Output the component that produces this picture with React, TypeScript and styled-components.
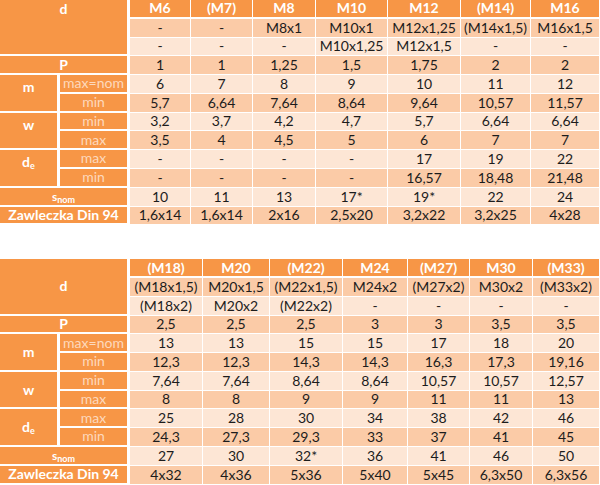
import React from "react";
import styled, { createGlobalStyle } from "styled-components";

const Global = createGlobalStyle`
  html, body { margin: 0; padding: 0; background: #fff; }
  body { font-family: Lato, "Open Sans", sans-serif; }
`;

const ORANGE = "#F79646";
const MID = "#FBCBA7";
const LIGHT = "#FDE6D5";

const Page = styled.div`
  width: 600px;
  display: flex;
  flex-direction: column;
  gap: 34px;
`;

const Table = styled.table`
  width: 600px;
  table-layout: fixed;
  border-collapse: separate;
  border-spacing: 0;
  font-size: 14px;
`;

const Row = styled.tr`
  height: 18.75px;
`;

const Label = styled.td<{ $sub?: boolean; $top?: number }>`
  background: ${ORANGE};
  color: ${(p) => (p.$sub ? "#FDD9BD" : "#fff")};
  font-weight: ${(p) => (p.$sub ? 400 : 700)};
  text-align: center;
  vertical-align: ${(p) => (p.$top !== undefined ? "top" : "middle")};
  padding: ${(p) => (p.$top !== undefined ? `${p.$top}px 0 0` : "0")};
  line-height: 16px;
  white-space: nowrap;
  border-bottom: 2px solid #fff;
  border-right: 3px solid #fff;
`;

const Head = styled.td`
  background: ${ORANGE};
  color: #fff;
  font-weight: 700;
  text-align: center;
  padding: 0;
  line-height: 16px;
  border-bottom: 2px solid #fff;
  border-right: 1px solid #fff;
  white-space: nowrap;
`;

const Cell = styled.td<{ $shade: "mid" | "light" }>`
  background: ${(p) => (p.$shade === "mid" ? MID : LIGHT)};
  color: #1c1c1c;
  text-align: center;
  padding: 0;
  line-height: 16px;
  border-bottom: 1px solid #fff;
  border-right: 1px solid #fff;
  white-space: nowrap;
`;

const Sub = styled.sub`
  font-size: 9px;
  vertical-align: -2px;
  line-height: 0;
`;

const Small = styled.span`
  font-size: 12px;
`;

type Data = {
  widths: number[];
  cols: string[];
  fine1: string[];
  fine2: string[];
  P: string[];
  mmax: string[];
  mmin: string[];
  wmin: string[];
  wmax: string[];
  demax: string[];
  demin: string[];
  s: string[];
  z: string[];
};

const top: Data = {
  widths: [61, 62, 63, 72, 73, 70, 69],
  cols: ["M6", "(M7)", "M8", "M10", "M12", "(M14)", "M16"],
  fine1: ["-", "-", "M8x1", "M10x1", "M12x1,25", "(M14x1,5)", "M16x1,5"],
  fine2: ["-", "-", "-", "M10x1,25", "M12x1,5", "-", "-"],
  P: ["1", "1", "1,25", "1,5", "1,75", "2", "2"],
  mmax: ["6", "7", "8", "9", "10", "11", "12"],
  mmin: ["5,7", "6,64", "7,64", "8,64", "9,64", "10,57", "11,57"],
  wmin: ["3,2", "3,7", "4,2", "4,7", "5,7", "6,64", "6,64"],
  wmax: ["3,5", "4", "4,5", "5", "6", "7", "7"],
  demax: ["-", "-", "-", "-", "17", "19", "22"],
  demin: ["-", "-", "-", "-", "16,57", "18,48", "21,48"],
  s: ["10", "11", "13", "17*", "19*", "22", "24"],
  z: ["1,6x14", "1,6x14", "2x16", "2,5x20", "3,2x22", "3,2x25", "4x28"],
};

const bottom: Data = {
  widths: [73, 67, 73, 65, 62, 63, 67],
  cols: ["(M18)", "M20", "(M22)", "M24", "(M27)", "M30", "(M33)"],
  fine1: ["(M18x1,5)", "M20x1,5", "(M22x1,5)", "M24x2", "(M27x2)", "M30x2", "(M33x2)"],
  fine2: ["(M18x2)", "M20x2", "(M22x2)", "-", "-", "-", "-"],
  P: ["2,5", "2,5", "2,5", "3", "3", "3,5", "3,5"],
  mmax: ["13", "13", "15", "15", "17", "18", "20"],
  mmin: ["12,3", "12,3", "14,3", "14,3", "16,3", "17,3", "19,16"],
  wmin: ["7,64", "7,64", "8,64", "8,64", "10,57", "10,57", "12,57"],
  wmax: ["8", "8", "9", "9", "11", "11", "13"],
  demax: ["25", "28", "30", "34", "38", "42", "46"],
  demin: ["24,3", "27,3", "29,3", "33", "37", "41", "45"],
  s: ["27", "30", "32*", "36", "41", "46", "50"],
  z: ["4x32", "4x36", "5x36", "5x40", "5x45", "6,3x50", "6,3x56"],
};

const Cells = ({ values, shade }: { values: string[]; shade: "mid" | "light" }) => (
  <>
    {values.map((v, i) => (
      <Cell key={i} $shade={shade}>
        {v}
      </Cell>
    ))}
  </>
);

const NutTable = ({ d, topAligned }: { d: Data; topAligned?: boolean }) => {
  const dTop = topAligned ? 1 : undefined;
  const gTop = topAligned ? 4 : undefined;
  return (
    <Table>
      <colgroup>
        <col style={{ width: 60 }} />
        <col style={{ width: 70 }} />
        {d.widths.map((w, i) => (
          <col key={i} style={{ width: w }} />
        ))}
      </colgroup>
      <tbody>
        <Row>
          <Label colSpan={2} rowSpan={3} $top={dTop}>
            d
          </Label>
          {d.cols.map((c, i) => (
            <Head key={i}>{c}</Head>
          ))}
        </Row>
        <Row>
          <Cells values={d.fine1} shade="mid" />
        </Row>
        <Row>
          <Cells values={d.fine2} shade="light" />
        </Row>
        <Row>
          <Label colSpan={2}>P</Label>
          <Cells values={d.P} shade="mid" />
        </Row>
        <Row>
          <Label rowSpan={2} $top={gTop}>
            m
          </Label>
          <Label $sub>max=nom</Label>
          <Cells values={d.mmax} shade="light" />
        </Row>
        <Row>
          <Label $sub>min</Label>
          <Cells values={d.mmin} shade="mid" />
        </Row>
        <Row>
          <Label rowSpan={2} $top={gTop}>
            w
          </Label>
          <Label $sub>min</Label>
          <Cells values={d.wmin} shade="light" />
        </Row>
        <Row>
          <Label $sub>max</Label>
          <Cells values={d.wmax} shade="mid" />
        </Row>
        <Row>
          <Label rowSpan={2} $top={gTop}>
            d<Sub>e</Sub>
          </Label>
          <Label $sub>max</Label>
          <Cells values={d.demax} shade="light" />
        </Row>
        <Row>
          <Label $sub>min</Label>
          <Cells values={d.demin} shade="mid" />
        </Row>
        <Row>
          <Label colSpan={2}>
            <Small>s</Small>
            <Sub>nom</Sub>
          </Label>
          <Cells values={d.s} shade="light" />
        </Row>
        <Row>
          <Label colSpan={2}>Zawleczka Din 94</Label>
          <Cells values={d.z} shade="mid" />
        </Row>
      </tbody>
    </Table>
  );
};

export default function App() {
  return (
    <>
      <Global />
      <Page>
        <NutTable d={top} topAligned />
        <NutTable d={bottom} />
      </Page>
    </>
  );
}
